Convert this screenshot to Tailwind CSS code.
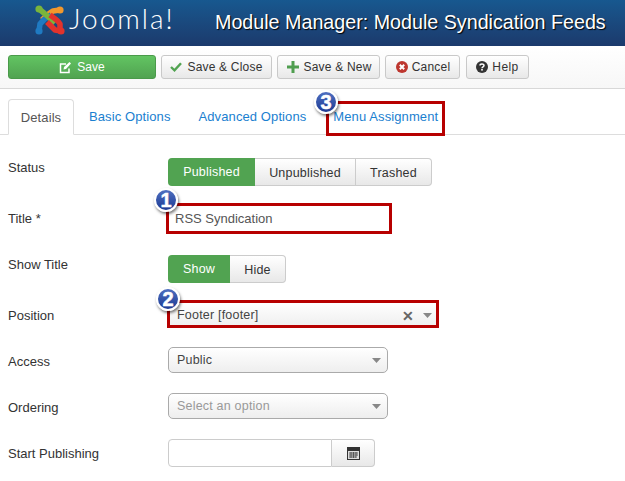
<!DOCTYPE html>
<html lang="en">
<head>
    <meta charset="UTF-8">
    <title>Module Manager: Module Syndication Feeds</title>
    <script src="https://cdn.jsdelivr.net/npm/@tailwindcss/browser@4"></script>
</head>
<body class="bg-white font-['Liberation_Sans',Arial,sans-serif] text-[13px] text-[#333]">
<div class="relative w-[625px] h-[481px] overflow-hidden">

    <!-- Header -->
    <header class="h-[46px] flex items-center bg-gradient-to-b from-[#17588f] to-[#1b3a6c]">
        <svg class="ml-[34px] -mt-[6px] w-[31px] h-[31px] shrink-0" viewBox="0 0 31 31" fill="none" stroke-width="5.500" stroke-linejoin="round">
            <path d="M26 5 L19 6 C15 8 11 12 8 15" stroke="#f2982c"/>
            <path d="M5 26 L6 19 C9 15 13 12 17 10" stroke="#1f7ac2"/>
            <path d="M5 4 L10 8 L21 18" stroke="#7ab53c"/>
            <path d="M27 26 L21 25 L13 17" stroke="#e1332c"/>
            <path d="M26 24 L26 19 C24 15 20 13 16 10" stroke="#e1332c"/>
            <circle cx="5" cy="4" r="3.600" fill="#7ab53c"/>
            <circle cx="26" cy="5" r="3.600" fill="#f2982c"/>
            <circle cx="27" cy="26" r="3.600" fill="#e1332c"/>
            <circle cx="5" cy="26" r="3.600" fill="#1f7ac2"/>
        </svg>
        <span class="ml-[4px] w-[111px] shrink-0 font-['Lato',sans-serif] font-light text-[28px] tracking-[2px] leading-none text-white -mt-[11px]">Joomla!</span>
        <h1 class="ml-[35px] whitespace-nowrap text-[19.700px] font-normal text-white [text-shadow:1px_1px_1px_#000]">Module Manager: Module Syndication Feeds</h1>
    </header>

    <!-- Toolbar -->
    <div class="h-[43px] pl-[8px] pt-[9px] flex gap-[5px] items-start bg-gradient-to-b from-white to-[#f7f7f7] border-b border-[#d8d8d8]">
        <button class="w-[148px] h-[24px] flex items-center justify-center gap-[5px] rounded-[3px] border border-[#4a9a4a] bg-gradient-to-b from-[#62c462] to-[#51a351] text-white text-[12px]">
            <svg class="w-[13px] h-[13px]" viewBox="0 0 13 13" fill="none" stroke="#fff"><path d="M10 7.500 V11.500 H1.500 V3 H7" stroke-width="1.500"/><path d="M4.500 8.500 L5 6 L10.500 1 L12 2.500 L7 8 Z" fill="#fff" stroke="none"/></svg>
            Save
        </button>
        <button class="w-[111px] h-[24px] flex items-center justify-center gap-[5px] rounded-[3px] border border-[#c9c9c9] bg-gradient-to-b from-white to-[#e8e8e8] text-[12px] tracking-[.2px]">
            <svg class="w-[12px] h-[10px]" viewBox="0 0 12 10" fill="none" stroke="#51a351" stroke-width="2.400"><path d="M1 5 L4.500 8.300 L11 1.200"/></svg>
            Save &amp; Close
        </button>
        <button class="w-[103px] h-[24px] pl-[2px] flex items-center justify-center gap-[4px] rounded-[3px] border border-[#c9c9c9] bg-gradient-to-b from-white to-[#e8e8e8] text-[12px] tracking-[.2px]">
            <svg class="w-[12px] h-[12px]" viewBox="0 0 12 12" fill="#4f9e4f"><path d="M4.500 0 H7.500 V4.500 H12 V7.500 H7.500 V12 H4.500 V7.500 H0 V4.500 H4.500 Z"/></svg>
            Save &amp; New
        </button>
        <button class="w-[75px] h-[24px] pl-[1px] flex items-center justify-center gap-[4px] rounded-[3px] border border-[#c9c9c9] bg-gradient-to-b from-white to-[#e8e8e8] text-[12px] tracking-[.2px]">
            <svg class="w-[12px] h-[12px]" viewBox="0 0 12 12"><circle cx="6" cy="6" r="6" fill="#bd362f"/><path d="M3.800 3.800 L8.200 8.200 M8.200 3.800 L3.800 8.200" stroke="#fff" stroke-width="2"/></svg>
            Cancel
        </button>
        <button class="ml-[1px] w-[63px] h-[24px] flex items-center justify-center gap-[4px] rounded-[3px] border border-[#c9c9c9] bg-gradient-to-b from-white to-[#e8e8e8] text-[12px] tracking-[.4px]">
            <svg class="w-[12px] h-[12px]" viewBox="0 0 12 12"><circle cx="6" cy="6" r="6" fill="#333"/><path d="M4 4.600 C4 2.400 8 2.400 8 4.500 C8 5.800 6 5.800 6 7.200" fill="none" stroke="#fff" stroke-width="1.500"/><rect x="5.200" y="8" width="1.600" height="1.600" fill="#fff"/></svg>
            Help
        </button>
    </div>

    <!-- Tabs -->
    <nav class="mt-[10px] h-[36px] pl-[8px] flex border-b border-[#ddd] text-[13px] tracking-[.1px]">
        <a class="w-[66px] h-[36px] pt-[1px] flex items-center justify-center bg-white border border-[#ddd] border-b-white rounded-t-[4px] text-[#555]">Details</a>
        <a class="ml-[15px] flex items-center text-[#1a80d0]">Basic Options</a>
        <a class="ml-[28px] flex items-center text-[#1a80d0]">Advanced Options</a>
        <a class="ml-[27px] flex items-center text-[#1a80d0]">Menu Assignment</a>
    </nav>

    <!-- Form -->
    <form class="mt-[23px] pl-[8px] text-[13px]">
        <div class="flex h-[46px]">
            <label class="w-[160px] pt-[1px] leading-[18px]">Status</label>
            <div class="flex h-[28px] text-center text-[12.500px] leading-[28px] tracking-[.2px]">
                <span class="w-[87px] rounded-l-[4px] bg-[#51a351] text-white">Published</span>
                <span class="w-[101px] border border-l-0 border-[#ccc] bg-gradient-to-b from-white to-[#e8e8e8]">Unpublished</span>
                <span class="w-[76px] border border-l-0 border-[#ccc] rounded-r-[4px] bg-gradient-to-b from-white to-[#e8e8e8]">Trashed</span>
            </div>
        </div>
        <div class="flex h-[51px]">
            <label class="w-[160px] pt-[6px] leading-[18px]">Title *</label>
            <div class="w-[223px] h-[29px] pl-[7px] leading-[29px] text-[#555]">RSS Syndication</div>
        </div>
        <div class="flex h-[46px]">
            <label class="w-[160px] pt-[1px] leading-[18px]">Show Title</label>
            <div class="flex h-[28px] text-center text-[12.500px] leading-[28px] tracking-[.2px]">
                <span class="w-[62px] rounded-l-[4px] bg-[#51a351] text-white">Show</span>
                <span class="w-[56px] border border-l-0 border-[#ccc] rounded-r-[4px] bg-gradient-to-b from-white to-[#e8e8e8]">Hide</span>
            </div>
        </div>
        <div class="flex h-[46px]">
            <label class="w-[160px] pt-[6px] leading-[18px]">Position</label>
            <div class="mt-[1px] w-[270px] h-[26px] pl-[9px] pr-[6px] pt-[1px] flex items-center bg-gradient-to-b from-white to-[#eee] text-[12.500px] text-[#444] tracking-[.2px]">
                <span class="flex-1">Footer [footer]</span>
                <span class="text-[14px] font-bold text-[#666] leading-none">✕</span>
                <svg class="ml-[9px] w-[9px] h-[5px]" viewBox="0 0 9 5" fill="#888"><path d="M0 0 H9 L4.500 5 Z"/></svg>
            </div>
        </div>
        <div class="flex h-[46px]">
            <label class="w-[160px] pt-[6px] leading-[18px]">Access</label>
            <div class="w-[220px] h-[26px] pl-[8px] pr-[6px] pt-[1px] flex items-center rounded-[5px] border border-[#aaa] bg-gradient-to-b from-white to-[#eee] text-[12.500px] text-[#444] tracking-[.2px]">
                <span class="flex-1">Public</span>
                <svg class="w-[9px] h-[5px]" viewBox="0 0 9 5" fill="#888"><path d="M0 0 H9 L4.500 5 Z"/></svg>
            </div>
        </div>
        <div class="flex h-[46px]">
            <label class="w-[160px] pt-[6px] leading-[18px]">Ordering</label>
            <div class="w-[220px] h-[26px] pl-[8px] pr-[6px] pt-[1px] flex items-center rounded-[5px] border border-[#aaa] bg-gradient-to-b from-white to-[#eee] text-[12.500px] text-[#999] tracking-[.2px]">
                <span class="flex-1">Select an option</span>
                <svg class="w-[9px] h-[5px]" viewBox="0 0 9 5" fill="#888"><path d="M0 0 H9 L4.500 5 Z"/></svg>
            </div>
        </div>
        <div class="flex">
            <label class="w-[160px] pt-[6px] leading-[18px]">Start Publishing</label>
            <div class="flex h-[28px]">
                <div class="w-[164px] border border-[#ccc] rounded-l-[4px]"></div>
                <div class="w-[43px] flex items-center justify-center border border-l-0 border-[#ccc] rounded-r-[4px] bg-gradient-to-b from-white to-[#e8e8e8]">
                    <svg class="w-[13px] h-[14px]" viewBox="0 0 13 14"><rect y="1" width="13" height="13" fill="#333"/><rect x="1" y="5" width="11" height="8" fill="#ddd"/><path d="M2 7 H11 M2 9 H11 M2 11 H9 M4 6 V12 M6.500 6 V12 M9 6 V12" stroke="#555"/></svg>
                </div>
            </div>
        </div>
    </form>

    <!-- Tutorial highlights drawn on the screenshot -->
    <div class="absolute left-[326px] top-[101px] w-[119px] h-[35px] border-[3px] border-[#b70000]"></div>
    <div class="absolute left-[166px] top-[203px] w-[226px] h-[31px] border-[3px] border-[#b70000]"></div>
    <div class="absolute left-[167px] top-[300px] w-[272px] h-[28px] border-[3px] border-[#b70000]"></div>

    <div class="absolute left-[314px] top-[90px] w-[24px] h-[24px] rounded-full border-2 border-white bg-gradient-to-b from-[#4f6fc0] to-[#1d3a94] shadow-[1px_2px_3px_#0008] text-white text-[20px] font-bold leading-[20px] text-center [-webkit-text-stroke:0.5px_white]">3</div>
    <div class="absolute left-[154px] top-[188px] w-[24px] h-[24px] rounded-full border-2 border-white bg-gradient-to-b from-[#4f6fc0] to-[#1d3a94] shadow-[1px_2px_3px_#0008] text-white text-[20px] font-bold leading-[20px] text-center [-webkit-text-stroke:0.5px_white]">1</div>
    <div class="absolute left-[156px] top-[287px] w-[24px] h-[24px] rounded-full border-2 border-white bg-gradient-to-b from-[#4f6fc0] to-[#1d3a94] shadow-[1px_2px_3px_#0008] text-white text-[20px] font-bold leading-[20px] text-center [-webkit-text-stroke:0.5px_white]">2</div>
</div>
</body>
</html>
